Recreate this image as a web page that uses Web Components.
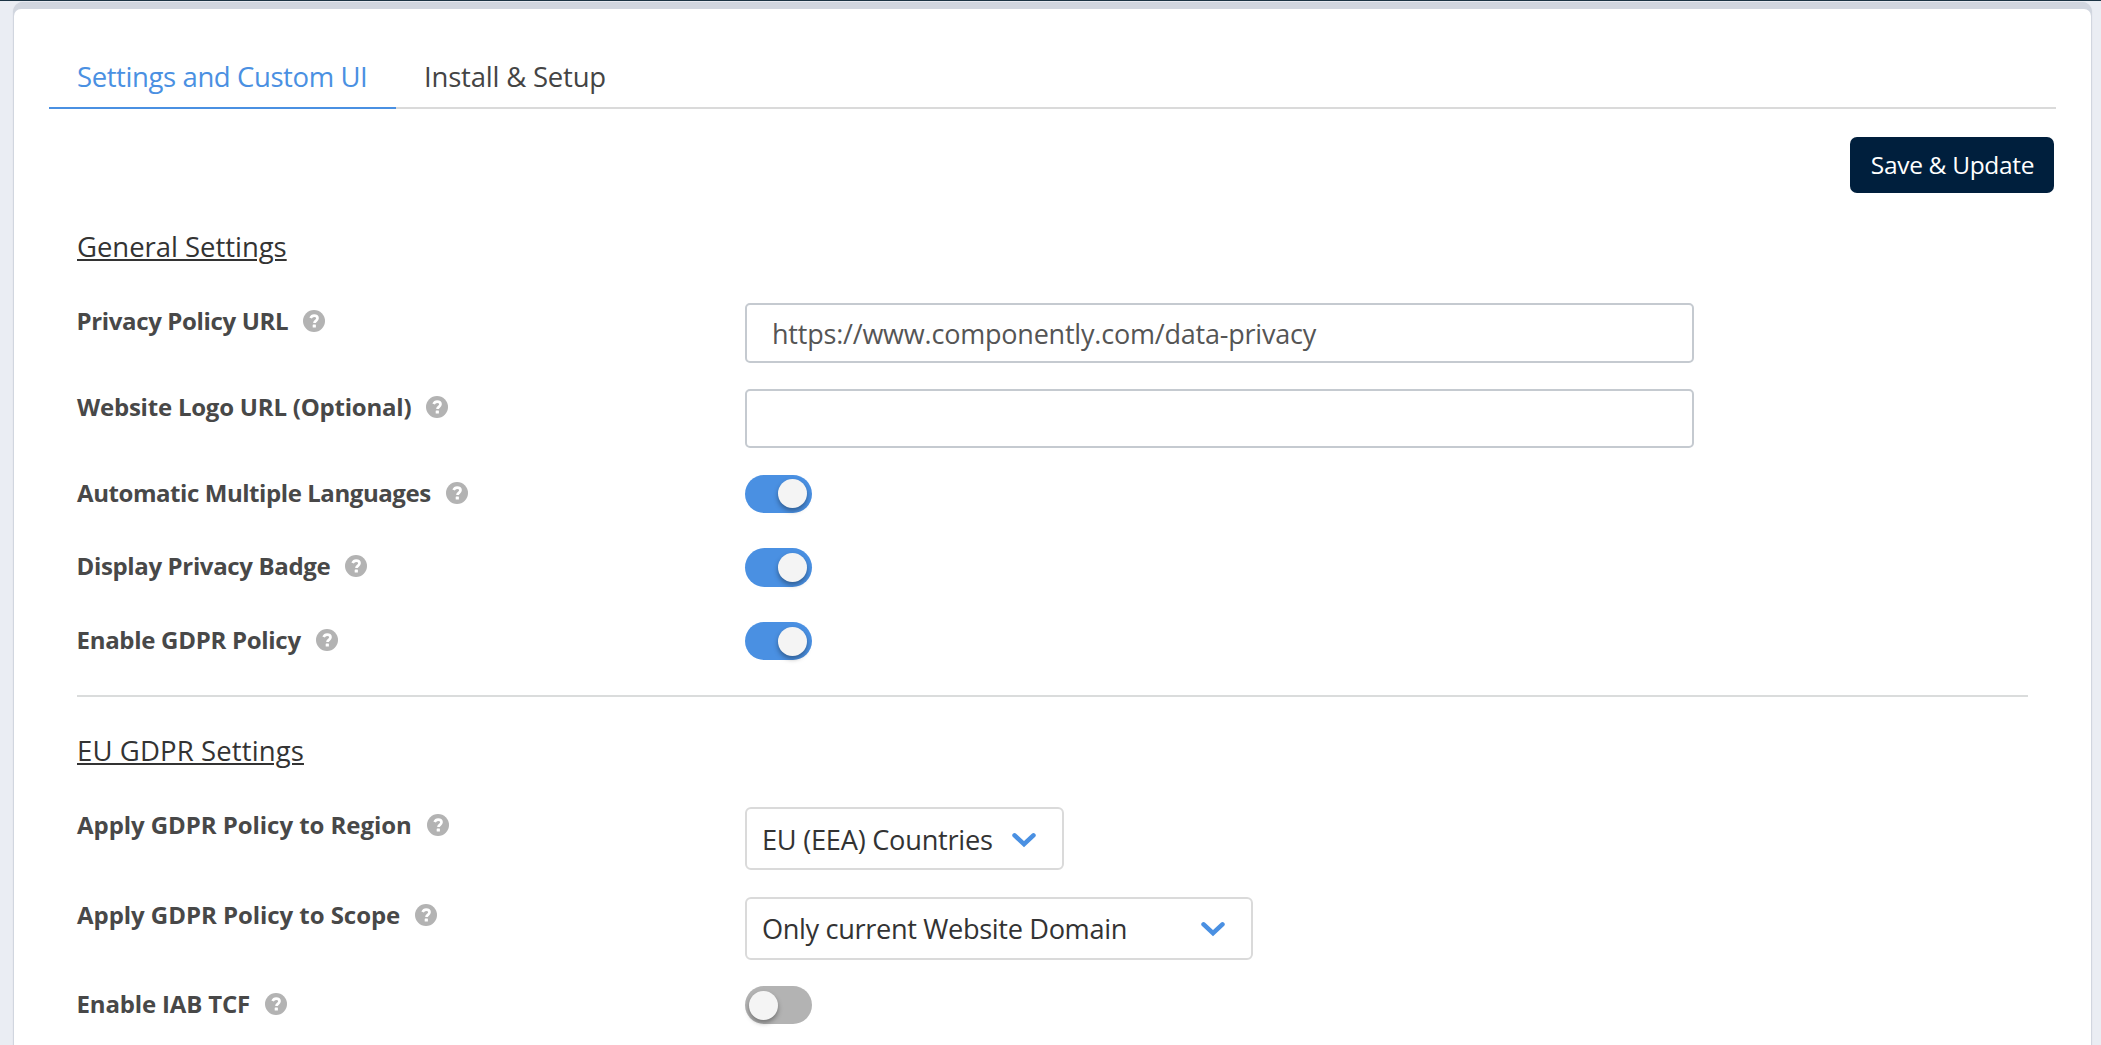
<!DOCTYPE html>
<html lang="en">
<head>
<meta charset="utf-8">
<title>Settings and Custom UI</title>
<style>
  html, body { margin: 0; height: 100%; overflow: hidden; }
  body { background: #eaedf3; font-family: "Open Sans", "Noto Sans", sans-serif; color: #484848; }
</style>
</head>
<body>
<settings-page>
  <tab-strip slot="tabs">
    <tab-item active style="--ls:-.4px">Settings and Custom UI</tab-item>
    <tab-item style="--ls:-.2px">Install &amp; Setup</tab-item>
  </tab-strip>
  <save-button slot="actions">Save &amp; Update</save-button>
  <settings-section heading="General Settings">
    <setting-row label="Privacy Policy URL" style="--h:86px;--ls:-.35px;--dx:-.5px"><text-field value="https://www.componently.com/data-privacy" style="--field-h:60px"></text-field></setting-row>
    <setting-row label="Website Logo URL (Optional)" style="--h:86px;--ls:-.22px"><text-field></text-field></setting-row>
    <setting-row label="Automatic Multiple Languages" style="--h:73px;--ls:-.43px"><toggle-switch on></toggle-switch></setting-row>
    <setting-row label="Display Privacy Badge" style="--h:74px;--ls:-.35px;--dx:-.5px"><toggle-switch on style="--track-h:39px;--k:5px"></toggle-switch></setting-row>
    <setting-row label="Enable GDPR Policy" style="--h:73px;--ls:-.29px;--dx:-.5px"><toggle-switch on style="--k:5px"></toggle-switch></setting-row>
  </settings-section>
  <settings-section heading="EU GDPR Settings" divided style="--hls:.12px">
    <setting-row label="Apply GDPR Policy to Region" style="--h:90px;--ls:-.06px"><select-box value="EU (EEA) Countries" style="--w:319px;--ls:-.25px;--end:26px"></select-box></setting-row>
    <setting-row label="Apply GDPR Policy to Scope" style="--h:89px;--ls:-.05px"><select-box value="Only current Website Domain" style="--w:508px;--ls:-.36px;--end:26px;--up:1px"></select-box></setting-row>
    <setting-row label="Enable IAB TCF" style="--h:74px;--ls:-.16px;--dx:-.5px"><toggle-switch style="--k:5px"></toggle-switch></setting-row>
  </settings-section>
</settings-page>
<script>
  const define = (name, html, setup) => customElements.define(name, class extends HTMLElement {
    constructor() {
      super();
      this.attachShadow({ mode: 'open' }).innerHTML = html;
      if (setup) setup(this, this.shadowRoot);
    }
  });

  define('settings-page', `
    <style>
      :host { display: block; box-sizing: border-box; height: 100%; border-top: 1px solid #1c3444; padding: 1px 9px 0 13px; overflow: hidden; }
      .shell { height: 1060px; background: #d1d6df; border-radius: 10px 10px 0 0; padding: 7px 1px 0; box-shadow: 0 0 1px #c9ced6; }
      .card { height: 100%; background: #fff; border-radius: 7px 7px 0 0; padding: 0 35px; display: flex; flex-direction: column; }
      .actions { display: flex; justify-content: flex-end; padding: 28px 2px 0 0; height: 56px; }
      .body { padding: 0 28px; }
    </style>
    <div class="shell"><div class="card">
      <slot name="tabs"></slot>
      <div class="actions"><slot name="actions"></slot></div>
      <div class="body"><slot></slot></div>
    </div></div>`);

  define('tab-strip', `
    <style>
      :host { display: flex; height: 100px; box-sizing: border-box; padding-top: 42px; box-shadow: inset 0 -2px #dadada; }
    </style><slot></slot>`);

  define('tab-item', `
    <style>
      :host { display: block; box-sizing: border-box; padding: 7px 27px 0 28px; border-bottom: 2px solid transparent; font-size: 27.5px; line-height: 38px; letter-spacing: var(--ls, 0); white-space: nowrap; color: #444; }
      :host([active]) { width: 347px; color: #4a90e2; border-color: #4a90e2; }
    </style><slot></slot>`);

  define('save-button', `
    <style>
      :host { display: block; }
      button { width: 204px; height: 56px; border: 0; border-radius: 7px; padding: 0 0 2px 1px; background: #001f3d; color: #fff; font: 24.5px "Open Sans", sans-serif; letter-spacing: -.33px; }
    </style><button><slot></slot></button>`);

  define('settings-section', `
    <style>
      :host { display: block; }
      :host([divided]) { border-top: 2px solid #dadcdc; }
      h2 { margin: 0; padding: 34px 0 37px; font-weight: 400; font-size: 27.5px; line-height: 39px; height: 39px; color: #333; letter-spacing: var(--hls, -.04px); }
      h2 span { text-decoration: underline; text-decoration-thickness: 2px; text-underline-offset: 2px; }
    </style><h2><span></span></h2><slot></slot>`,
    (host, root) => root.querySelector('span').textContent = host.getAttribute('heading'));

  define('setting-row', `
    <style>
      :host { display: grid; grid-template-columns: 668px 1fr; align-items: start; height: var(--h); }
      .label { display: flex; align-items: flex-start; font-weight: 700; font-size: 24px; line-height: 35px; height: 35px; letter-spacing: var(--ls, 0); color: #484848; }
      .label span { margin-left: var(--dx, 0); white-space: nowrap; }
    </style><div class="label"><span></span><help-icon></help-icon></div><slot></slot>`,
    (host, root) => root.querySelector('span').textContent = host.getAttribute('label'));

  define('help-icon', `
    <style>
      :host { display: block; margin: 7px 0 0 15px; width: 22px; height: 22px; }
      svg { display: block; }
    </style>
    <svg width="22" height="22" viewBox="0 0 22 22"><circle cx="11" cy="11" r="11" fill="#b3b3b3"/><path d="M7.6 8.1C8.3 6.4 9.5 5.6 11.1 5.6c2 0 3.4 1.1 3.4 2.7 0 2.4-3 2.6-3 4.6" fill="none" stroke="#fff" stroke-width="2.7"/><rect x="9.7" y="14.6" width="3.2" height="3" rx=".4" fill="#fff"/></svg>`);

  define('text-field', `
    <style>
      :host { display: block; width: 949px; height: var(--field-h, 59px); }
      input { display: block; box-sizing: border-box; width: 100%; height: 100%; border: 2px solid #c5cad0; border-radius: 5px; background: #fff; outline: 0; margin: 0; padding: 1px 25px; font: 27px "Open Sans", sans-serif; letter-spacing: -.21px; color: #555; }
    </style><input type="text">`,
    (host, root) => root.querySelector('input').value = host.getAttribute('value') || '');

  define('toggle-switch', `
    <style>
      :host { display: block; box-sizing: border-box; width: 67px; height: var(--track-h, 38px); border-radius: 20px; background: #b3b3b3; padding: var(--k, 4px) 4px 0; }
      :host([on]) { background: #4a90e2; padding-left: 33px; }
      i { display: block; width: 29px; height: 29px; border-radius: 50%; background: #f4f4f4; box-shadow: 0 3px 5px rgba(0,0,0,.35); }
    </style><i></i>`);

  define('select-box', `
    <style>
      :host { display: flex; align-items: center; justify-content: space-between; box-sizing: border-box; width: var(--w); height: 63px; border: 2px solid #dadada; border-radius: 6px; padding: 0 var(--end) var(--up, 0) 15px; font-size: 27.2px; line-height: 38px; letter-spacing: var(--ls); color: #333; }
      span { margin: 2px 0 0; white-space: nowrap; }
      svg { display: block; margin-top: 2px; }
    </style><span></span>
    <svg width="24" height="16" viewBox="0 0 24 16"><path d="M2.6 3.4 12 12.2l9.4-8.8" fill="none" stroke="#4a90e2" stroke-width="4.6" stroke-linecap="round" stroke-linejoin="miter"/></svg>`,
    (host, root) => root.querySelector('span').textContent = host.getAttribute('value'));
</script>
</body>
</html>
